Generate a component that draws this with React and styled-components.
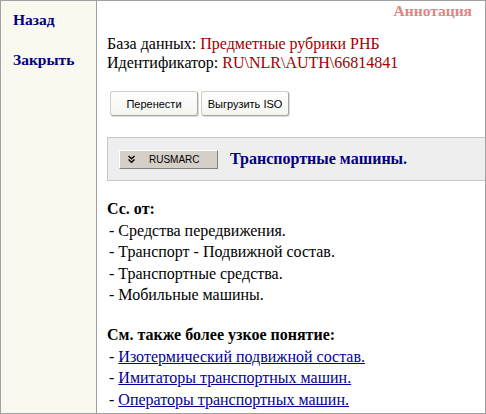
import styled, { createGlobalStyle } from "styled-components";

const GlobalStyle = createGlobalStyle`
    body {
        margin: 0;
        background: #ffffff;
        font-family: "Liberation Serif", "Times New Roman", serif;
    }
`

const seeFrom = [
    "Средства передвижения.",
    "Транспорт - Подвижной состав.",
    "Транспортные средства.",
    "Мобильные машины."
];

const narrower = [
    "Изотермический подвижной состав.",
    "Имитаторы транспортных машин.",
    "Операторы транспортных машин."
];

function ChevronsDown(){
    return (
        <svg width="9" height="9" viewBox="0 0 9 9">
            <path d="M1.5 1 L4.5 3.8 L7.5 1 M1.5 4.5 L4.5 7.3 L7.5 4.5" fill="none" stroke="#000" strokeWidth="1.4"/>
        </svg>
    )
}

export default function App(){
    return (
        <>
            <GlobalStyle/>
            <Frame>
                <Sidebar>
                    <SideLink>Назад</SideLink>
                    <SideLink>Закрыть</SideLink>
                </Sidebar>

                <Main>
                    <Annotation>Аннотация</Annotation>

                    <Info>
                        <p>База данных: <Red>Предметные рубрики РНБ</Red></p>
                        <p>Идентификатор: <Red>RU\NLR\AUTH\66814841</Red></p>
                    </Info>

                    <Actions>
                        <ActionButton>Перенести</ActionButton>
                        <ActionButton>Выгрузить ISO</ActionButton>
                    </Actions>

                    <Panel>
                        <MarcButton>
                            <ChevronsDown/>
                            <span>RUSMARC</span>
                        </MarcButton>
                        <Title>Транспортные машины.</Title>
                    </Panel>

                    <Section>
                        <Heading>Сс. от:</Heading>
                        {seeFrom.map((item, i) => <Item key={i}>- {item}</Item>)}
                    </Section>

                    <Section $gap={18.5}>
                        <Heading>См. также более узкое понятие:</Heading>
                        {narrower.map((item, i) => <Item key={i}>- <a href="#">{item}</a></Item>)}
                    </Section>
                </Main>
            </Frame>
        </>
    )
}

const Frame = styled.div`
    width: 486px;
    height: 414px;
    box-sizing: border-box;
    border: 1px solid #a0a0a0;
    display: flex;
    overflow: hidden;
    font-family: "Liberation Serif", "Times New Roman", serif;
`

const Sidebar = styled.nav`
    width: 96px;
    flex-shrink: 0;
    background-color: #f9f9f0;
    border-right: 1px solid #a0a0a0;
    display: flex;
    flex-direction: column;
    gap: 22px;
    padding: 10px 0 0 12px;
    box-sizing: border-box;
`

const SideLink = styled.a`
    font-size: 15.5px;
    line-height: 18px;
    font-weight: bold;
    color: #000080;
`

const Main = styled.main`
    flex: 1;
    min-width: 0;
    overflow: hidden;
    padding-left: 10px;
    font-size: 16px;
    color: #000;
`

const Annotation = styled.div`
    text-align: right;
    padding-right: 13px;
    font-size: 15.5px;
    line-height: 18px;
    margin-top: 1px;
    font-weight: bold;
    color: #e08585;
`

const Info = styled.div`
    margin-top: 14px;
    & p{
        margin: 0;
        line-height: 19px;
    }
`

const Red = styled.span`
    color: #a00000;
`

const Actions = styled.div`
    display: flex;
    gap: 3px;
    margin-top: 19px;
    padding-left: 3px;
`

const ActionButton = styled.button`
    width: 88px;
    height: 25px;
    padding: 0;
    font-family: "Liberation Sans", Arial, sans-serif;
    font-size: 11px;
    color: #000;
    background: linear-gradient(#ffffff, #f4f4f0);
    border: 1px solid #cfcfc8;
    border-right-color: #a8a8a0;
    border-bottom-color: #a8a8a0;
    border-radius: 3px;
    box-shadow: 1px 1px 0 #dcdcd4;
`

const Panel = styled.div`
    margin-top: 21px;
    margin-right: -20px;
    height: 44px;
    box-sizing: border-box;
    background-color: #eeeeee;
    border: 1px solid #c8c8c0;
    display: flex;
    align-items: center;
    gap: 12px;
    padding: 0 0 0 11px;
`

const MarcButton = styled.div`
    width: 99px;
    height: 19px;
    box-sizing: border-box;
    display: flex;
    align-items: center;
    gap: 13px;
    padding-left: 7px;
    background-color: #d4d0c8;
    border: 1px solid;
    border-color: #ffffff #808080 #808080 #ffffff;
    font-family: "Liberation Sans", Arial, sans-serif;
    font-size: 10px;
    color: #000;
`

const Title = styled.span`
    font-size: 16px;
    font-weight: bold;
    color: #000080;
`

const Section = styled.section`
    margin-top: ${props => props.$gap || 17}px;
`

const Heading = styled.div`
    font-weight: bold;
    line-height: 21.5px;
`

const Item = styled.div`
    line-height: 21.5px;
    padding-left: 2px;
    & a{
        color: #000099;
    }
`
